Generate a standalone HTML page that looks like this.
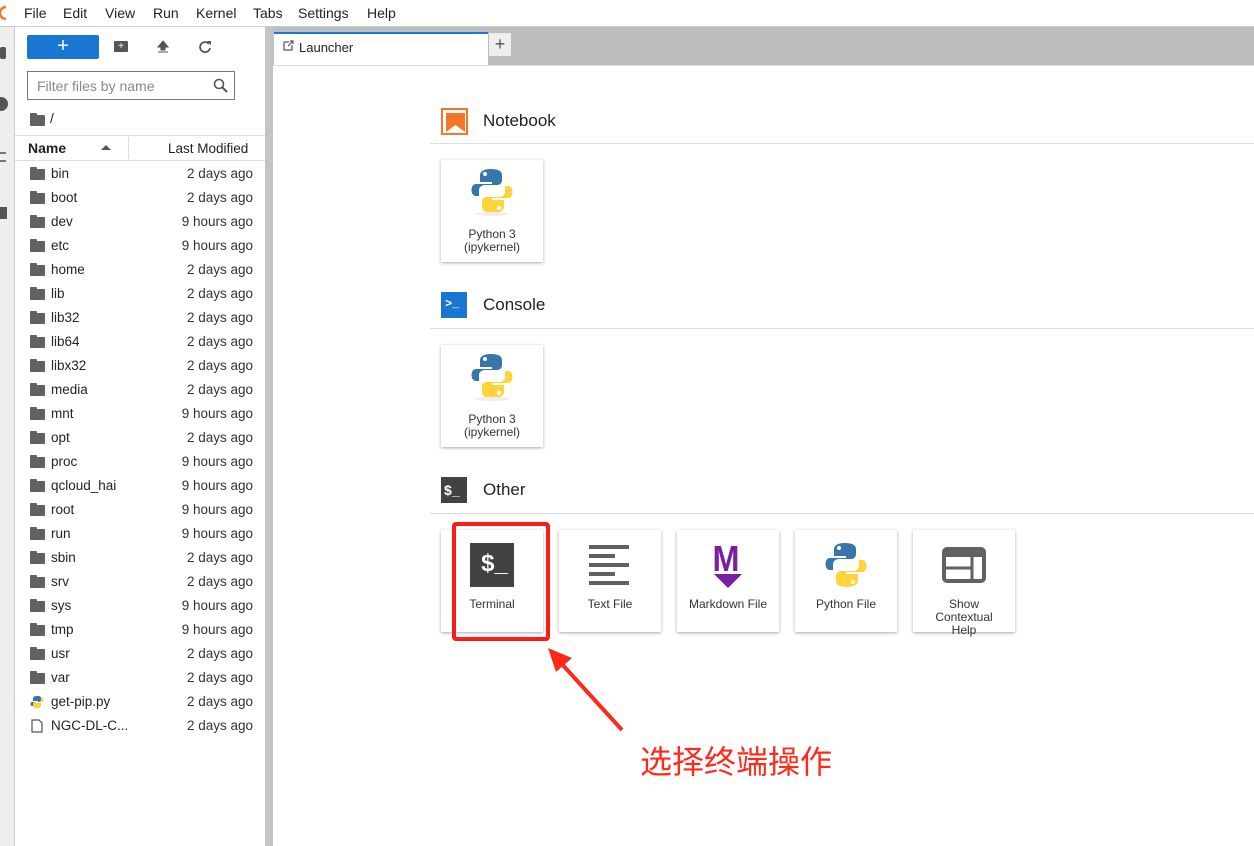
<!DOCTYPE html><html><head><meta charset="utf-8"><style>
*{box-sizing:border-box;margin:0;padding:0}
body{width:1254px;height:846px;overflow:hidden;font-family:"Liberation Sans",sans-serif;background:#fff;position:relative;color:#222}
.abs{position:absolute}
.menu{top:0;left:0;width:1254px;height:27px;border-bottom:1px solid #ccc;font-size:14px}
.menu span{position:absolute;top:5px}
.strip{top:27px;left:0;width:15px;height:819px;background:#eee;border-right:1px solid #ccc}
.split{top:27px;left:265px;width:8px;height:819px;background:#c4c4c4}
.tabbar{top:27px;left:273px;width:981px;height:38px;background:#bdbdbd;border-bottom:1px solid #bbb}
.row{position:absolute;left:28px;width:230px;height:24px;font-size:13.5px}
.row .n{position:absolute;left:23px;top:4px}
.row .d{position:absolute;right:5px;top:4px;color:#333}
.fold{position:absolute;left:2px;top:7px;width:15px;height:11px;background:#616161;border-radius:1px}
.fold:before{content:"";position:absolute;left:0;top:-2px;width:7px;height:3px;background:#616161;border-radius:1px 1px 0 0}
.hdr{font-size:17px;position:absolute}
.hr{position:absolute;left:430px;width:824px;height:1px;background:#ddd}
.card{position:absolute;width:102px;height:102px;background:#fff;box-shadow:0 1px 3px rgba(0,0,0,.35);font-size:12px;text-align:center;color:#333}
.card .t{position:absolute;left:0;width:100%;line-height:13px}
</style></head><body>
<div class="abs menu">
<svg class="abs" style="left:0;top:4px" width="8" height="18"><path d="M6 3 A6 6 0 0 0 6 15" stroke="#f37726" stroke-width="2.5" fill="none"/></svg>
<span style="left:24px">File</span><span style="left:63px">Edit</span><span style="left:105px">View</span><span style="left:153px">Run</span><span style="left:196px">Kernel</span><span style="left:253px">Tabs</span><span style="left:298px">Settings</span><span style="left:367px">Help</span></div>
<div class="abs strip"><div class="abs" style="left:0;top:20px;width:6px;height:12px;background:#555;border-radius:2px"></div><div class="abs" style="left:0;top:70px;width:8px;height:14px;background:#555;border-radius:0 7px 7px 0"></div><div class="abs" style="left:0;top:125px;width:6px;height:10px;border-top:2px solid #777;border-bottom:2px solid #777"></div><div class="abs" style="left:0;top:180px;width:7px;height:12px;background:#555"></div></div>
<div class="abs" style="left:27px;top:35px;width:72px;height:24px;background:#1976d2;border-radius:2px;color:#fff;text-align:center;font-size:20px;line-height:23px">+</div>
<div class="abs" style="left:114px;top:41px;width:14px;height:11px;background:#555;border-radius:1px;color:#fff;font-size:10px;line-height:11px;text-align:center">+</div>
<svg class="abs" style="left:156px;top:40px" width="14" height="14"><path d="M7 1 L12 7 H9 V10 H5 V7 H2Z M2 12 H12" fill="#555" stroke="#555" stroke-width="1"/></svg>
<svg class="abs" style="left:198px;top:40px" width="14" height="14"><path d="M11 4 A5 5 0 1 0 12 8" stroke="#555" stroke-width="1.8" fill="none"/><path d="M9 1 L13 1 L13 5Z" fill="#555"/></svg>
<div class="abs" style="left:27px;top:71px;width:208px;height:29px;border:1px solid #777;font-size:14px;color:#888;padding:6px 9px">Filter files by name</div>
<svg class="abs" style="left:213px;top:78px" width="16" height="16"><circle cx="6" cy="6" r="4.5" stroke="#555" stroke-width="1.6" fill="none"/><path d="M9.5 9.5 L14 14" stroke="#555" stroke-width="2"/></svg>
<div class="row" style="top:107px"><div class="fold" style="top:8px"></div><span class="n" style="left:22px;top:3px;font-size:14px">/</span></div>
<div class="abs" style="left:15px;top:135px;width:250px;height:1px;background:#ddd"></div>
<div class="abs" style="left:15px;top:160px;width:250px;height:1px;background:#ddd"></div>
<div class="abs" style="left:128px;top:137px;width:1px;height:22px;background:#ddd"></div>
<div class="abs" style="left:28px;top:140px;font-size:14px;font-weight:bold">Name</div>
<div class="abs" style="left:101px;top:145px;width:0;height:0;border-left:5px solid transparent;border-right:5px solid transparent;border-bottom:5px solid #555"></div>
<div class="abs" style="left:168px;top:141px;font-size:13.5px">Last Modified</div>
<div id="rows"></div>
<script>
var r=[["bin",2],["boot",2],["dev",9],["etc",9],["home",2],["lib",2],["lib32",2],["lib64",2],["libx32",2],["media",2],["mnt",9],["opt",2],["proc",9],["qcloud_hai",9],["root",9],["run",9],["sbin",2],["srv",2],["sys",9],["tmp",9],["usr",2],["var",2],["get-pip.py",2,1],["NGC-DL-C...",2,2]];
var h="";r.forEach(function(x,i){var ic=x[2]==1?'<svg style="position:absolute;left:2px;top:5px" width="14" height="14"><path d="M7 1C3 1 3 3 3 4V6H8V7H2C0 7 0 11 2 11H3V9C3 8 4 7 5 7H9C10 7 11 6 11 5V3C11 1 9 1 7 1Z" fill="#3776ab"/><path d="M7 13C11 13 11 11 11 10V8H6V7H12C14 7 14 3 12 3H11V5C11 6 10 7 9 7H5C4 7 3 8 3 9V11C3 13 5 13 7 13Z" fill="#ffd43b"/></svg>':x[2]==2?'<svg style="position:absolute;left:3px;top:5px" width="12" height="14"><path d="M1 1H8L11 4V13H1Z" stroke="#555" stroke-width="1.2" fill="none"/></svg>':'<div class="fold"></div>';
h+='<div class="row" style="top:'+(162+i*24)+'px">'+ic+'<span class="n">'+x[0]+'</span><span class="d">'+(x[1]==2?'2 days ago':'9 hours ago')+'</span></div>';});
document.getElementById("rows").innerHTML=h;
</script>
<div class="abs split"></div>
<div class="abs tabbar"><div class="abs" style="left:1px;top:5px;width:214px;height:33px;background:#fff;border-top:2px solid #1976d2;font-size:13px;padding:6px 0 0 25px">Launcher</div>
<svg class="abs" style="left:10px;top:13px" width="11" height="11"><path d="M1 2H6M1 2V10H9V5M5 6L10 1M7 1H10V4" stroke="#555" stroke-width="1.2" fill="none"/></svg>
<div class="abs" style="left:215px;top:5px;width:24px;height:25px;background:#eee;border:1px solid #bbb;text-align:center;font-size:18px;line-height:22px;color:#555">+</div></div>
<div class="abs" style="left:273px;top:65px;width:981px;height:1px;background:#ddd"></div>

<div class="abs" style="left:441px;top:108px;width:27px;height:27px;border:2px solid #f37726;padding:3px"><svg width="19" height="19"><path d="M0 0H19V19L9.5 12L0 19Z" fill="#f37726"/></svg></div>
<div class="hdr" style="left:483px;top:111px">Notebook</div><div class="hr" style="top:143px"></div>
<div class="abs" style="left:441px;top:292px;width:26px;height:26px;background:#1976d2;color:#fff;font-size:12px;font-family:'Liberation Mono',monospace;padding:5px 0 0 4px;font-weight:bold">&gt;_</div>
<div class="hdr" style="left:483px;top:295px">Console</div><div class="hr" style="top:328px"></div>
<div class="abs" style="left:441px;top:477px;width:26px;height:26px;background:#424242;color:#fff;font-size:14px;font-weight:bold;padding:5px 0 0 3px">$_</div>
<div class="hdr" style="left:483px;top:480px">Other</div><div class="hr" style="top:513px"></div>

<svg width="0" height="0" style="position:absolute"><defs><g id="py"><path d="M21 0C10 0 10 5 10 7V13H22V15H6C0 15 0 27 6 27H9V21C9 18 12 16 15 16H27C30 16 32 14 32 11V6C32 2 28 0 21 0Z" fill="#3776ab"/><circle cx="15" cy="5" r="2" fill="#fff"/><path d="M23 44C34 44 34 39 34 37V31H22V29H38C44 29 44 17 38 17H35V23C35 26 32 28 29 28H17C14 28 12 30 12 33V38C12 42 16 44 23 44Z" fill="#ffd43b"/><circle cx="29" cy="39" r="2" fill="#fff"/></g></defs></svg>

<div class="card" style="left:441px;top:160px"><svg class="abs" style="left:29px;top:9px" width="44" height="46"><use href="#py"/></svg><div class="abs" style="left:34px;top:52px;width:34px;height:4px;background:#eee;border-radius:50%"></div><div class="t" style="top:68px">Python 3<br>(ipykernel)</div></div>
<div class="card" style="left:441px;top:345px"><svg class="abs" style="left:29px;top:9px" width="44" height="46"><use href="#py"/></svg><div class="abs" style="left:34px;top:52px;width:34px;height:4px;background:#eee;border-radius:50%"></div><div class="t" style="top:68px">Python 3<br>(ipykernel)</div></div>

<div class="card" style="left:441px;top:530px"><div class="abs" style="left:29px;top:13px;width:44px;height:44px;background:#424242;color:#fff;font-size:24px;font-weight:bold;padding:7px 0 0 5px">$_</div><div class="t" style="top:68px">Terminal</div></div>
<div class="card" style="left:559px;top:530px"><svg class="abs" style="left:29px;top:14px" width="44" height="44"><g fill="#616161"><rect x="1" y="1" width="40" height="4"/><rect x="1" y="10" width="26" height="4"/><rect x="1" y="19" width="40" height="4"/><rect x="1" y="28" width="26" height="4"/><rect x="1" y="37" width="40" height="4"/></g></svg><div class="t" style="top:68px">Text File</div></div>
<div class="card" style="left:677px;top:530px"><div class="abs" style="left:34px;top:8px;font-size:36px;font-weight:bold;color:#7b1fa2;transform:scaleX(.9)">M</div><svg class="abs" style="left:37px;top:44px" width="28" height="15"><path d="M0 0H28L14 14Z" fill="#7b1fa2"/></svg><div class="t" style="top:68px">Markdown File</div></div>
<div class="card" style="left:795px;top:530px"><svg class="abs" style="left:29px;top:13px" width="44" height="46"><use href="#py"/></svg><div class="t" style="top:68px">Python File</div></div>
<div class="card" style="left:913px;top:530px"><svg class="abs" style="left:29px;top:17px" width="44" height="36"><rect x="2" y="2" width="40" height="32" rx="3" fill="none" stroke="#616161" stroke-width="4"/><rect x="2" y="2" width="40" height="8" fill="#616161"/><path d="M2 21H30M30 10V34" stroke="#616161" stroke-width="3"/></svg><div class="t" style="top:68px">Show<br>Contextual<br>Help</div></div>

<div class="abs" style="left:452px;top:522px;width:98px;height:119px;border:4px solid #ff1a1a;border-radius:4px"></div>
<svg class="abs" style="left:540px;top:640px" width="90" height="100"><path d="M82 90 L20 22" stroke="#ff2a1a" stroke-width="4"/><path d="M8 8 L32 18 L16 32Z" fill="#ff2a1a"/></svg>
<div class="abs" style="left:640px;top:737px;font-size:32px;color:#ff2a1a;font-family:'Liberation Sans','Noto Sans CJK SC',sans-serif">选择终端操作</div>
</body></html>
